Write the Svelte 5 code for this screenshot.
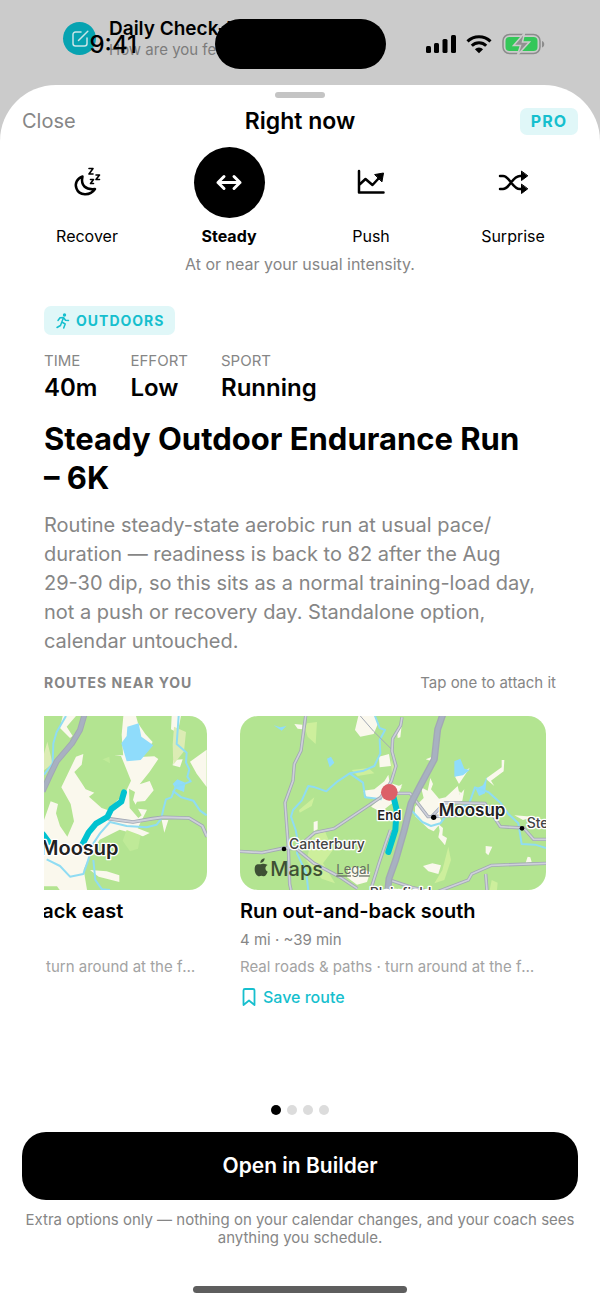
<script>
    const modes = [
        { id: "recover", label: "Recover" },
        { id: "steady", label: "Steady" },
        { id: "push", label: "Push" },
        { id: "surprise", label: "Surprise" },
    ];

    const stats = [
        { label: "TIME", value: "40m" },
        { label: "EFFORT", value: "Low" },
        { label: "SPORT", value: "Running" },
    ];

    const routes = [
        { id: "east", name: "Run out-and-back east" },
        { id: "south", name: "Run out-and-back south" },
    ];

    let mode = $state("steady");
    let page = $state(0);
</script>

<div class="screen">
    <header class="top">
        <!-- the page behind the sheet -->
        <div class="behind">
            <span class="checkin-icon">
                <svg viewBox="0 0 20 20" width="20" height="20">
                    <path d="M11 3H5.500a2.500 2.500 0 0 0-2.500 2.500v9A2.500 2.500 0 0 0 5.500 17h9a2.500 2.500 0 0 0 2.500-2.500V9M8.500 11.500 17.800 2.200" />
                </svg>
            </span>
            <div>
                <p class="checkin-title">Daily Check-In</p>
                <p class="checkin-text">How are you feeling?</p>
            </div>
        </div>
        <div class="status">
            <span class="time">9:41</span>
            <span class="island"></span>
            <span class="signals">
                <svg viewBox="0 0 30 20" width="30" height="20">
                    <rect x="0" y="12" width="5" height="7" rx="1.500" />
                    <rect x="8" y="9" width="5" height="10" rx="1.500" />
                    <rect x="16.500" y="5" width="5" height="14" rx="1.500" />
                    <rect x="25" y="1" width="5" height="18" rx="1.500" />
                </svg>
                <svg viewBox="0 0 26 20" width="26" height="20">
                    <path class="wave" d="M1.500 7.300a16.500 16.500 0 0 1 23 0" />
                    <path class="wave" d="M5.800 11.700a10.300 10.300 0 0 1 14.400 0" />
                    <path d="M13 19.300 8.900 15.200a5.800 5.800 0 0 1 8.200 0z" />
                </svg>
                <svg viewBox="0 0 43 22" width="43" height="22">
                    <rect x="1" y="1.500" width="37" height="19" rx="6.500" fill="none" stroke="#8c8c8c" stroke-width="1.500" />
                    <path d="M40 8v6.500c3-.8 3-5.700 0-6.500z" fill="#8c8c8c" />
                    <rect x="3.500" y="4" width="32" height="14" rx="4" fill="#34c759" />
                    <path d="M22.500 0 11.500 12.500h7l-3 9.500 12-13h-7z" fill="#919191" stroke="#cbcbcb" stroke-width="1.500" />
                </svg>
            </span>
        </div>
    </header>

    <main class="sheet">
        <span class="grabber"></span>
        <div class="nav">
            <button class="close">Close</button>
            <h1>Right now</h1>
            <span class="pro">PRO</span>
        </div>

        <div class="modes">
            {#each modes as m (m.id)}
                <button class="mode" class:active={mode === m.id} onclick={() => (mode = m.id)}>
                    <span class="disc">
                        <svg viewBox="0 0 32 32" width="32" height="32">
                            {#if m.id === "recover"}
                                <path d="M11.500 9.500C6 11.500 3.500 16.500 5.500 21.500c2.500 7 13.500 8 18.500.5-9.500 1-14.500-3.500-12.500-12.500z" />
                                <path class="thin" d="M18 1.500h4L18 7h4M25 8h3.500L25 12.500h3.500M19.500 12.500H22.500l-3 4h3" />
                            {:else if m.id === "steady"}
                                <path class="bold" d="M5 15.500h22M11 9.500l-6 6 6 6M21 9.500l6 6-6 6" />
                            {:else if m.id === "push"}
                                <path d="M4 4v21.500h24.500M4 18l6.500-6 7 6 6-6.500" />
                                <path class="solid" d="m20 7.500 8.500-1.500-1.500 8.500z" />
                            {:else}
                                <path d="M3 9h3c7 0 9 13 17 13h3M3 22h3c7 0 9-13 17-13h3" />
                                <path class="solid" d="M24.500 4.500v9l6-4.500zM24.500 17.500v9l6-4.500z" />
                            {/if}
                        </svg>
                    </span>
                    <span class="mode-label">{m.label}</span>
                </button>
            {/each}
        </div>
        <p class="hint">At or near your usual intensity.</p>

        <section class="workout">
            <span class="tag">
                <svg viewBox="0 0 16 16" width="16" height="16">
                    <circle cx="9.500" cy="2" r="1.700" />
                    <path d="M3 7.500 5 4.800l3.500-.3 2 2.800 3 .2M8.500 4.800 6.800 9l3.400 2-1.500 4M6.800 9 5.500 12.500 2 14.500" />
                </svg>
                OUTDOORS
            </span>
            <dl class="stats">
                {#each stats as s}
                    <div>
                        <dt>{s.label}</dt>
                        <dd>{s.value}</dd>
                    </div>
                {/each}
            </dl>
            <h2>Steady Outdoor Endurance Run <span class="keep">– 6K</span></h2>
            <p class="about">
                Routine steady-state aerobic run at usual pace/<wbr />duration — readiness is back to 82 after the Aug
                <span class="keep">29-30</span> dip, so this sits as a normal training-load day, not a push or recovery
                day. Standalone option, calendar untouched.
            </p>
            <div class="routes-head">
                <h3>ROUTES NEAR YOU</h3>
                <span>Tap one to attach it</span>
            </div>

            <div class="routes">
                {#each routes as r (r.id)}
                    <article class="route">
                        {#if r.id === "east"}
                            <svg class="map" viewBox="-417 18 918 522">
                                <rect x="-417" y="18" width="918" height="522" fill="#b3e491" />
                                <g class="town">
                                    <path d="M68 18h40L80 50l18 28-8 6-30-30zM108 140l22-8-5 32-22 22 20 30 14 22 26 10-16 12 38 34 24 8 20-28 24-20 20-42-12-30-18-44-20-3 25 1 50 5 45-2 12 8-26 38-30 38 30-10 12 28-26 32-24 2-10 20 40 4-28 56 36 14-20 10-70-20-60 30-30 50-18 40 10 60 10 10 4 80-32-10-10-50-40-10-22-30H12V330l20-56 22 8-6 28 12 38 22 32 20-46-10-52-28-50z" />
                                    <path d="M250 18h38l6 22 22 32 22 24-28 42-60 6-5-70zM395 18h28l-10 50-20-10zM450 155l50-36v112l-30-40zM365 330h20l-12 38zM400 150l28-2-8 24-22-6zM150 480l50 4 38 12v20l-62-16zM12 456h24l-10 18H12z" />
                                </g>
                                <g class="wood">
                                    <path d="M267 236l18 10-6 24 26 46-10 8-26-30z" />
                                </g>
                                <path d="M402 50l36 16-6 58-32 40-2-60zM22 95l16 66-26 20v-50z" fill="#dcecb4" />
                                <path d="M260 360l42 16-8 40-24 8-22-32zM188 148l20-8 2 20z" fill="#bfea98" />
                                <path class="lake" d="M262 50l34-10 8 40 36 26-38 44-42 4-16-54 16-22zM398 222l14-14 24 10-4 28-24-10z" />
                                <g class="stream">
                                    <path d="M78 18 50 66 40 100l-2 60-26 34" />
                                    <path d="M416 18l-6 84 30 26-2 30 10 20-6 22 10 14-24 10-20 4-14 34-16 6-8 30-6 28-14 18-30 8-60-4-50-12-30 34-20 30-16 52-14 40-40 8-30-32-40-20" />
                                    <path d="M398 242l26 20 36 10 20 30 20 14M160 450l6 60 20 28 24 2" stroke-width="5" />
                                </g>
                                <g class="road">
                                    <path d="M205 326l74 10 58-10 32-4 78 2 40 24 14 32" stroke-width="11" />
                                    <path class="core" d="M205 326l74 10 58-10 32-4 78 2 40 24 14 32" stroke-width="6" />
                                    <path d="M134 12l-14 48-24 40-46 54-22 46-20 44" stroke-width="18" />
                                    <path class="highway" d="M134 12l-14 48-24 40-46 54-22 46-20 44" stroke-width="12" />
                                </g>
                                <path class="trail" d="M252 247l-8 28-30 22-12 24-34 20-22 26-22 42M-40 330l50 44 16 22" />
                                <text class="place near" x="0" y="434">Moosup</text>
                            </svg>
                        {:else}
                            <svg class="map" viewBox="15 18 918 522">
                                <rect x="15" y="18" width="918" height="522" fill="#b3e491" />
                                <path d="M216 40l30-4-4 66-24-22-8-26zM192 300l46-38-8 26-36 20zM232 380l36-20 26 60-30 40 36 60-40-14-46-54zM350 180l50-6 18 16-50 8zM640 410l8 40-20 60-30 10 24-40zM468 150l14 30-10 36zM770 510l18 8-2 22h-22z" fill="#cdef9c" />
                                <g class="town">
                                    <path d="M370 18h48l12 20-14 34-40 8-16-20zM178 42l24 2v14l-14-2zM432 140l30-8 6 36-34 4zM384 242l34-4 30-24 12-20 4 24 36 12-24 46-38 30-30-16 24-22-36-6zM236 336l12-4v26l-12 6zM340 474l26-4 40 16-10 30-30 8-30-22zM486 60l14-14-4 36-8 2zM480 234l22-12-8 18zM572 148l20-8-6 12z" />
                                    <path d="M540 290l26-26-8-32 20 10 8-38 8 18-6 16 24 28 20-4 36-34 6 26 14-16-6 34-50 18-20 26 8 20-24 28-16-8-40-38zM672 244l14 10-8 14zM610 342l14 12-2 22 14 8-6 22-20-24 4-20zM752 206l48-34v-22h8l-2 34-38 28 10 16zM660 200l44-26-32 48zM564 468l28-8 26 6-8 26-30-8zM752 408l20 2-12 26-8-8zM878 440l8 2 4 14-18 2zM838 316l56 4-30 10z" />
                                </g>
                                <path class="lake" d="M658 154l18-8 12 30 16 4-20 16-26 4zM116 46l20 6 18-4-14 14zM276 146l12-6 10 18-14 14zM722 236l22-10 12-26-6 50-18 8z" />
                                <g class="stream">
                                    <path d="M420 18l14 36 16 6-16 30 2 40-18 38-32 14-42 8-36 24-34 30-34-12-20-4-20 44-26 28-6 20 14 40 8 40-4 30 28 60 8 70" stroke-width="7" />
                                    <path d="M344 190l40 28 6 44 50 6M528 300l34 36 26 12 28-8 26-36 60-22 18-50 40 14 36 32 24 34 30 28 10 62 40 2 40 12" stroke-width="5" />
                                </g>
                                <g class="road">
                                    <path d="M376 18l40 46 52 52" stroke-width="3" />
                                    <path d="M212 18l-14 104-20 40-4 50-24 66 10 134 4 110 4 18M15 424l66 4 66-14 36 2 54 44 76 40 54 36M183 416l56-48 58-12 140-94 32-48 14-46-12-44 2-38 24-40 4-24M465 250h60l54 70 90-4M590 320l40-42 120 2 46 70 70 4 30 34h38M430 540l-20-10 22-70 20-60 14-40M470 512l60 20 70 16 100-38 10-18 60-26 164-6M752 492l4 50" stroke-width="10" />
                                    <path class="core" d="M212 18l-14 104-20 40-4 50-24 66 10 134 4 110 4 18M15 424l66 4 66-14 36 2 54 44 76 40 54 36M183 416l56-48 58-12 140-94 32-48 14-46-12-44 2-38 24-40 4-24M465 250h60l54 70 90-4M590 320l40-42 120 2 46 70 70 4 30 34h38M430 540l-20-10 22-70 20-60 14-40M470 512l60 20 70 16 100-38 10-18 60-26 164-6M752 492l4 50" stroke-width="5" />
                                    <path d="M624 12l-16 46-10 90-44 82-26 50-20 80-26 90-20 56-4 40" stroke-width="21" />
                                    <path class="highway" d="M624 12l-16 46-10 90-44 82-26 50-20 80-26 90-20 56-4 40" stroke-width="13" />
                                </g>
                                <path class="trail" d="M473 250l12 50-4 60-21 66" />
                                <circle cx="463" cy="247" r="25" fill="#dc6068" />
                                <circle cx="147" cy="417" r="7" />
                                <circle cx="596" cy="322" r="8" />
                                <circle cx="861" cy="355" r="7" />
                                <text class="place" x="427" y="330">End</text>
                                <text class="place soft" x="162" y="417">Canterbury</text>
                                <text class="place major" x="611" y="318">Moosup</text>
                                <text class="place soft" x="875" y="354">Sterling</text>
                                <text class="place soft" x="404" y="563">Plainfield</text>
                                <path d="M93 463c-6-4-14 0-18 0-5 0-16-4-16 15 0 14 9 22 14 21 5-2 7-2 12 0 6 1 10-7 13-14-9-4-9-16 0-20zM76 459c0-8 5-13 13-14 0 8-5 14-13 14z" fill="#3d5034" />
                                <text class="maps" x="106" y="499">Maps</text>
                                <a href="#legal"><text class="legal" x="304" y="493">Legal</text></a>
                            </svg>
                        {/if}
                        <h4>{r.name}</h4>
                        <p class="distance">4 mi · ~39 min</p>
                        <p class="surface">Real roads &amp; paths · turn around at the far end</p>
                        <button class="save">
                            <svg viewBox="0 0 18 20" width="18" height="20">
                                <path d="M3.500 3.500A1.500 1.500 0 0 1 5 2h8a1.500 1.500 0 0 1 1.500 1.500V18L9 13.500 3.500 18z" />
                            </svg>
                            Save route
                        </button>
                    </article>
                {/each}
            </div>
        </section>

        <footer>
            <div class="dots">
                {#each [0, 1, 2, 3] as n}
                    <button class="dot" class:on={page === n} aria-label="Option {n + 1}" onclick={() => (page = n)}></button>
                {/each}
            </div>
            <button class="open">Open in Builder</button>
            <p class="note">Extra options only — nothing on your calendar changes, and your coach sees anything you schedule.</p>
            <span class="home"></span>
        </footer>
    </main>
</div>

<style>
    :global(body) {
        background: #cbcbcb;
    }

    .screen {
        min-height: 100vh;
        display: flex;
        flex-direction: column;
        font-family: Inter, "Liberation Sans", sans-serif;
        color: #000;
    }

    h1, h2, h3, h4, p, dl, dd {
        margin: 0;
    }

    button {
        font: inherit;
        color: inherit;
        background: none;
        border: 0;
        padding: 0;
        cursor: pointer;
    }

    /* status bar */
    .top {
        position: relative;
        height: 85px;
    }

    .behind {
        position: absolute;
        top: 17px;
        left: 63px;
        display: flex;
        gap: 13px;
    }

    .checkin-icon {
        width: 33px;
        height: 33px;
        margin-top: 5px;
        border-radius: 50%;
        background: #07a3b1;
        display: grid;
        place-items: center;
    }

    .checkin-icon path {
        fill: none;
        stroke: #c9e5e8;
        stroke-width: 1.5px;
        stroke-linecap: round;
    }

    .checkin-title {
        font-size: 19px;
        font-weight: 600;
        line-height: 23px;
    }

    .checkin-text {
        font-size: 15px;
        line-height: 20px;
        color: #7c7c7c;
    }

    .status {
        position: relative;
        display: grid;
        grid-template-columns: 1fr 171px 1fr;
        align-items: center;
        padding-top: 19px;
    }

    .time {
        padding-left: 12px;
        text-align: center;
        font-size: 24px;
        font-weight: 500;
    }

    .island {
        height: 50px;
        border-radius: 25px;
        background: #000;
    }

    .signals {
        display: flex;
        align-items: center;
        justify-content: center;
        gap: 10px;
        padding-right: 14px;
    }

    .wave {
        fill: none;
        stroke: #000;
        stroke-width: 3px;
    }

    /* sheet */
    .sheet {
        flex: 1;
        display: flex;
        flex-direction: column;
        background: #fff;
        border-radius: 56px 56px 0 0;
    }

    .grabber {
        width: 50px;
        height: 6px;
        margin: 7px auto 0;
        border-radius: 3px;
        background: #c4c4c4;
    }

    .nav {
        display: grid;
        grid-template-columns: 1fr auto 1fr;
        align-items: center;
        height: 30px;
        margin-top: 8px;
        padding: 0 22px;
    }

    .close {
        justify-self: start;
        font-size: 20px;
        color: #868686;
    }

    h1 {
        font-size: 23px;
        font-weight: 600;
    }

    .pro {
        justify-self: end;
        padding: 0 11px;
        border-radius: 7px;
        background: #e0f7f8;
        color: #16bfce;
        font-size: 16px;
        font-weight: 700;
        line-height: 27px;
        letter-spacing: 1px;
    }

    .modes {
        display: grid;
        grid-template-columns: repeat(4, 1fr);
        margin-top: 11px;
        padding: 0 16px;
    }

    .mode {
        display: flex;
        flex-direction: column;
        align-items: center;
        gap: 7px;
        font-size: 16px;
        line-height: 22px;
    }

    .disc {
        width: 71px;
        height: 71px;
        border-radius: 50%;
        display: grid;
        place-items: center;
    }

    .disc path {
        fill: none;
        stroke: currentColor;
        stroke-width: 2.5px;
        stroke-linecap: round;
        stroke-linejoin: round;
    }

    .disc .thin {
        stroke-width: 1.6px;
    }

    .disc .bold {
        stroke-width: 3px;
    }

    .disc .solid {
        fill: currentColor;
        stroke-width: 1px;
    }

    .active {
        font-weight: 700;
    }

    .active .disc {
        background: #000;
        color: #fff;
    }

    .hint {
        margin-top: 6px;
        text-align: center;
        font-size: 16px;
        line-height: 22px;
        color: #868686;
    }

    .workout {
        display: flex;
        flex-direction: column;
        align-items: flex-start;
        padding: 0 44px;
        margin-top: 31px;
    }

    .tag {
        display: flex;
        align-items: center;
        gap: 5px;
        padding: 0 11px;
        border-radius: 7px;
        background: #e0f7f8;
        color: #16bfce;
        font-size: 14px;
        font-weight: 700;
        line-height: 29px;
        letter-spacing: 1px;
    }

    .tag circle {
        fill: #16bfce;
    }

    .tag path {
        fill: none;
        stroke: #16bfce;
        stroke-width: 1.5px;
        stroke-linecap: round;
        stroke-linejoin: round;
    }

    .stats {
        display: flex;
        gap: 33px;
        margin-top: 15px;
    }

    dt {
        font-size: 15px;
        line-height: 22px;
        color: #868686;
    }

    dd {
        font-size: 24px;
        font-weight: 600;
        line-height: 31px;
    }

    h2 {
        margin-top: 16px;
        font-size: 31px;
        font-weight: 700;
        line-height: 39px;
    }

    .about {
        margin-top: 14px;
        font-size: 20px;
        line-height: 29px;
        color: #868686;
    }

    .keep {
        white-space: nowrap;
    }

    .routes-head {
        align-self: stretch;
        display: flex;
        justify-content: space-between;
        margin-top: 17px;
        font-size: 15px;
        line-height: 20px;
        color: #868686;
    }

    h3 {
        font-size: 14px;
        font-weight: 700;
        letter-spacing: 1px;
    }

    /* row rests on its last card, earlier cards run off to the left */
    .routes {
        align-self: stretch;
        display: flex;
        justify-content: flex-end;
        gap: 33px;
        margin-top: 23px;
        padding-right: 10px;
        overflow: hidden;
    }

    .route {
        flex: 0 0 306px;
        min-width: 0;
        display: flex;
        flex-direction: column;
        align-items: flex-start;
    }

    .map {
        display: block;
        width: 100%;
        border-radius: 18px;
    }

    .town path {
        fill: #faf8ed;
    }

    .wood path {
        fill: #b3e491;
    }

    .lake {
        fill: #8fdcfb;
    }

    .stream path {
        fill: none;
        stroke: #8fdcf3;
        stroke-width: 6px;
        stroke-linejoin: round;
    }

    .road path {
        fill: none;
        stroke: #a2a8b4;
        stroke-linejoin: round;
    }

    .road .core {
        stroke: #ced0da;
    }

    .road .highway {
        stroke: #a8b1c1;
    }

    .trail {
        fill: none;
        stroke: #00c2d0;
        stroke-width: 18px;
        stroke-linecap: round;
        stroke-linejoin: round;
    }

    .place {
        font-size: 39px;
        font-weight: 600;
        fill: #222;
        stroke: #fff;
        stroke-width: 8px;
        stroke-linejoin: round;
        paint-order: stroke;
    }

    .soft {
        font-size: 42px;
        font-weight: 500;
        fill: #444;
    }

    .major {
        font-size: 51px;
    }

    .near {
        font-size: 60px;
    }

    .maps {
        font-size: 60px;
        font-weight: 500;
        fill: #3d5034;
    }

    .legal {
        font-size: 39px;
        fill: #666f62;
        text-decoration: underline;
    }

    h4 {
        margin-top: 8px;
        font-size: 20px;
        font-weight: 600;
        line-height: 26px;
    }

    .distance,
    .surface {
        margin-top: 5px;
        font-size: 15px;
        line-height: 22px;
        color: #868686;
    }

    .surface {
        align-self: stretch;
        padding-right: 8px;
        color: #a3a3a3;
        white-space: nowrap;
        overflow: hidden;
        text-overflow: ellipsis;
    }

    .save {
        display: flex;
        align-items: center;
        gap: 5px;
        margin-top: 8px;
        font-size: 16px;
        font-weight: 500;
        line-height: 22px;
        color: #16bfce;
    }

    .save path {
        fill: none;
        stroke: #16bfce;
        stroke-width: 1.8px;
        stroke-linejoin: round;
    }

    footer {
        display: flex;
        flex-direction: column;
        margin-top: auto;
        padding: 24px 22px 11px;
    }

    .dots {
        display: flex;
        justify-content: center;
        gap: 6px;
    }

    .dot {
        width: 10px;
        height: 10px;
        border-radius: 50%;
        background: #dcdcdc;
    }

    .on {
        background: #000;
    }

    .open {
        margin-top: 17px;
        border-radius: 24px;
        background: #000;
        color: #fff;
        font-size: 21px;
        font-weight: 600;
        line-height: 68px;
    }

    .note {
        margin-top: 11px;
        text-align: center;
        font-size: 15px;
        line-height: 18px;
        color: #868686;
    }

    .home {
        width: 214px;
        height: 7px;
        margin: 39px auto 0;
        border-radius: 4px;
        background: #5e5e5e;
    }
</style>
